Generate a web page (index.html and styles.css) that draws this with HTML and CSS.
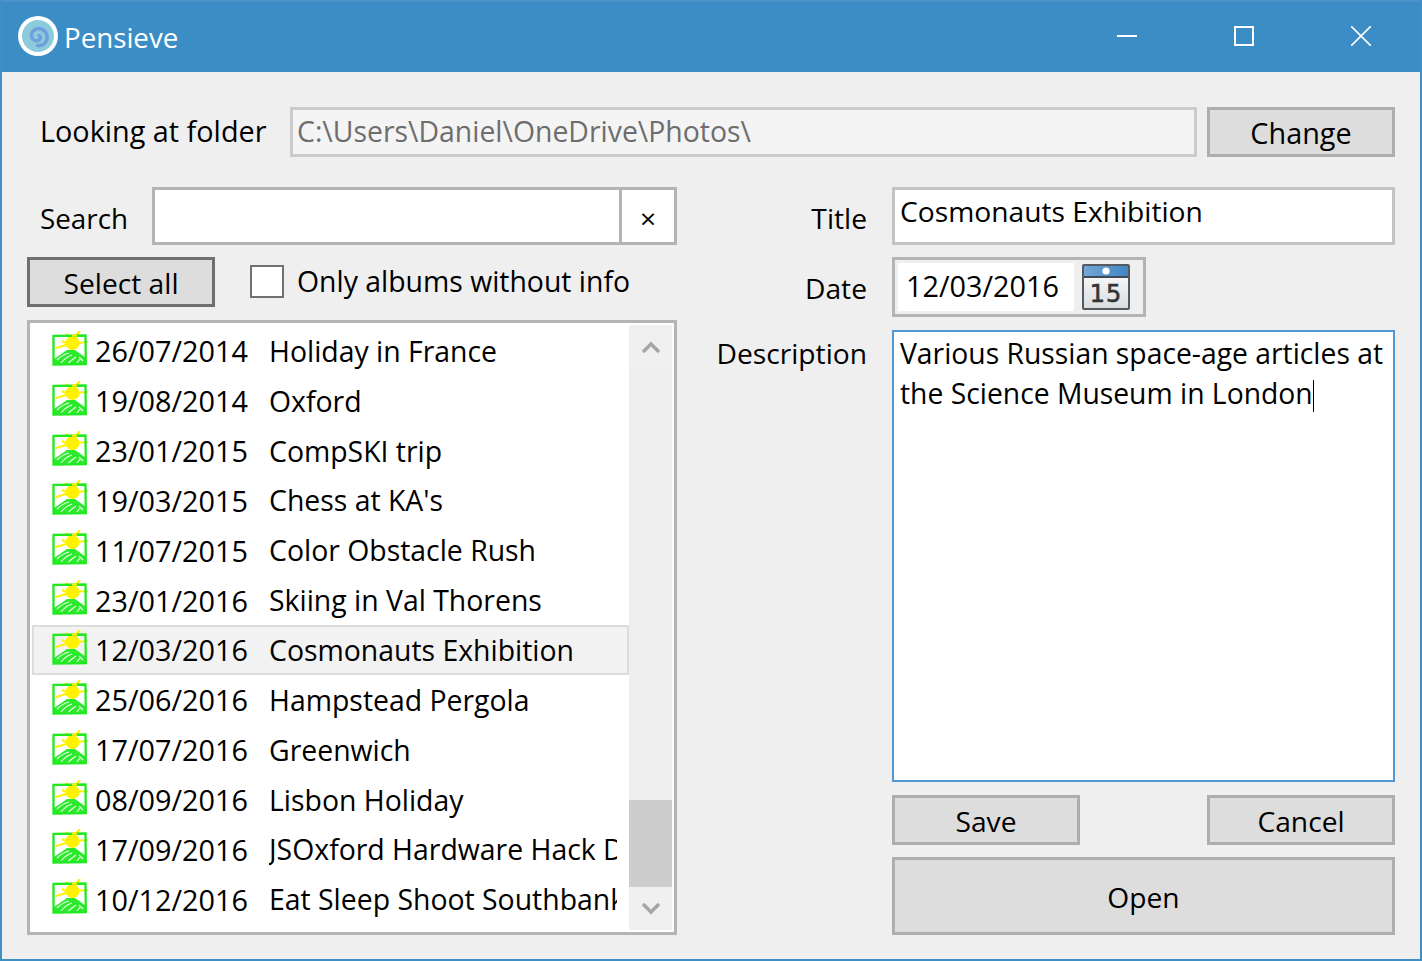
FILE: index.html
```html
<!DOCTYPE html>
<html lang="en">
<head>
    <meta charset="UTF-8">
    <meta name="viewport" content="width=device-width, initial-scale=1.0">
    <title>Pensieve</title>
    <link rel="stylesheet" href="styles.css">
</head>
<body>
    <div class="window">
        <header class="titlebar">
            <svg class="logo" viewBox="0 0 40 40">
                <circle cx="20" cy="20" r="20" fill="#fff"/>
                <circle cx="20" cy="20" r="16" fill="#8ccbdc"/>
                <path d="M21 19.500c2 1 2 4-1 5-4 1-7-2-6.500-6 .5-4 5-7 9.500-5.500 5 1.500 7.500 7 5.500 11.500-1.500 3.500-5 5.500-9 5" fill="none" stroke="#6f9fdc" stroke-width="3.400" stroke-linecap="round"/>
            </svg>
            <span class="app-name">Pensieve</span>
            <div class="window-controls">
                <span class="control"><svg viewBox="0 0 20 20"><path d="M0 10h20" stroke="#fff" stroke-width="2"/></svg></span>
                <span class="control"><svg viewBox="0 0 20 20"><rect x="1" y="1" width="18" height="18" fill="none" stroke="#fff" stroke-width="2"/></svg></span>
                <span class="control"><svg viewBox="0 0 20 20"><path d="M0 0l20 20M20 0L0 20" stroke="#fff" stroke-width="1.6"/></svg></span>
            </div>
        </header>

        <main class="content">
            <div class="folder-row">
                <span class="folder-label">Looking at folder</span>
                <div class="folder-path">C:\Users\Daniel\OneDrive\Photos\</div>
                <button class="btn btn-change" type="button">Change</button>
            </div>

            <div class="panels">
                <section class="left-panel">
                    <div class="search-row">
                        <span class="search-label">Search</span>
                        <div class="search-box">
                            <div class="search-input"></div>
                            <div class="search-clear">×</div>
                        </div>
                    </div>
                    <div class="select-row">
                        <button class="btn btn-select" type="button"><span class="btn-text">Select all</span></button>
                        <span class="checkbox"></span>
                        <span class="check-label">Only albums without info</span>
                    </div>
                    <div class="album-list">
                        <div class="albums" id="albums"></div>
                        <div class="scrollbar">
                            <div class="scroll-btn">
                                <svg viewBox="0 0 20 16"><path d="M2 13l8-8 8 8" fill="none" stroke="#a6a6a6" stroke-width="3.500"/></svg>
                            </div>
                            <div class="scroll-track"><div class="scroll-thumb"></div></div>
                            <div class="scroll-btn">
                                <svg viewBox="0 0 20 16"><path d="M2 3l8 8 8-8" fill="none" stroke="#a6a6a6" stroke-width="3.500"/></svg>
                            </div>
                        </div>
                    </div>
                </section>

                <section class="right-panel">
                    <span class="field-label label-title">Title</span>
                    <div class="title-box">Cosmonauts Exhibition</div>

                    <span class="field-label label-date">Date</span>
                    <div class="date-box">
                        <div class="date-text">12/03/2016</div>
                        <svg class="calendar" viewBox="0 0 48 46">
                            <defs>
                                <linearGradient id="calTop" x1="0" x2="1" y1="0" y2="0">
                                    <stop offset="0" stop-color="#74a7d6"/>
                                    <stop offset="1" stop-color="#3f86c2"/>
                                </linearGradient>
                                <linearGradient id="calBody" x1="0" x2="0" y1="0" y2="1">
                                    <stop offset="0" stop-color="#ffffff"/>
                                    <stop offset="1" stop-color="#d8dde0"/>
                                </linearGradient>
                            </defs>
                            <rect x="1" y="1" width="46" height="44" rx="1" fill="url(#calBody)" stroke="#555a60" stroke-width="2"/>
                            <rect x="2" y="2" width="44" height="10" fill="url(#calTop)"/>
                            <rect x="2" y="12" width="44" height="2" fill="#3f4a55"/>
                            <circle cx="24" cy="7" r="3.6" fill="#fff"/>
                            <text x="24" y="38" text-anchor="middle" class="cal-num">15</text>
                        </svg>
                    </div>

                    <span class="field-label label-desc">Description</span>
                    <div class="desc-box">Various Russian space-age articles at<br>the Science Museum in London<span class="caret"></span></div>

                    <div class="actions">
                        <div class="save-row">
                            <button class="btn btn-small" type="button"><span class="btn-text">Save</span></button>
                            <button class="btn btn-small" type="button"><span class="btn-text">Cancel</span></button>
                        </div>
                        <button class="btn btn-open" type="button"><span class="btn-text">Open</span></button>
                    </div>
                </section>
            </div>
        </main>
    </div>

    <template id="albumIcon">
        <svg class="album-icon" viewBox="0 0 36 36">
            <circle cx="20.500" cy="12" r="7" fill="#fff200"/>
            <path d="M21 8L28 0M23 12l13-1M14 12L10 10M14 14l-10 3M17 6l-3-3" stroke="#fff200" stroke-width="2.200" fill="none"/>
            <path d="M2 28l13-9 8 0 11 8v6H2z" fill="#2bea2b"/>
            <path d="M5 29c4-4 8-6 12-7M9 32c4-5 8-7 11-8M16 33c2-3 5-5 8-7M25 32l3-4M27 26l4 4" stroke="#e4fbe4" stroke-width="1.200" fill="none"/>
            <path d="M1.500 4.800l32-.3.300 28.700-32.300.3z" fill="none" stroke="#22e822" stroke-width="2.300"/>
            <path d="M20 4.700l5-.2" stroke="#fff200" stroke-width="2.300"/>
        </svg>
    </template>

    <script>
        const albums = [
            ['26/07/2014', 'Holiday in France'],
            ['19/08/2014', 'Oxford'],
            ['23/01/2015', 'CompSKI trip'],
            ['19/03/2015', "Chess at KA's"],
            ['11/07/2015', 'Color Obstacle Rush'],
            ['23/01/2016', 'Skiing in Val Thorens'],
            ['12/03/2016', 'Cosmonauts Exhibition'],
            ['25/06/2016', 'Hampstead Pergola'],
            ['17/07/2016', 'Greenwich'],
            ['08/09/2016', 'Lisbon Holiday'],
            ['17/09/2016', 'JSOxford Hardware Hack Day'],
            ['10/12/2016', 'Eat Sleep Shoot Southbank']
        ];

        const list = document.getElementById('albums');
        const icon = document.getElementById('albumIcon');

        albums.forEach(function(album, i) {
            const row = document.createElement('div');
            row.className = i === 6 ? 'album selected' : 'album';
            row.appendChild(icon.content.cloneNode(true));

            const date = document.createElement('span');
            date.className = 'album-date';
            date.textContent = album[0];
            row.appendChild(date);

            const name = document.createElement('span');
            name.className = 'album-name';
            name.textContent = album[1];
            row.appendChild(name);

            list.appendChild(row);
        });
    </script>
</body>
</html>
```

FILE: styles.css
```css
* {
    box-sizing: border-box;
}

body {
    margin: 0;
    font-family: "Open Sans", "Noto Sans", sans-serif;
    font-size: 28.2px;
    color: #000;
    background: #efefef;
}

.window {
    width: 1422px;
    height: 961px;
    border: 2px solid #3f8fc7;
    border-top: 0;
    display: flex;
    flex-direction: column;
    overflow: hidden;
}

.titlebar {
    height: 72px;
    background: #3c8dc5;
    border-top: 2px solid #4a94ca;
    display: flex;
    align-items: center;
    padding-left: 16px;
    color: #fff;
}

.logo {
    width: 40px;
    height: 40px;
    flex: none;
    margin-top: -2px;
}

.app-name {
    margin-left: 6px;
    font-size: 27.7px;
}

.window-controls {
    margin-left: auto;
    display: flex;
    margin-right: 1px;
    margin-top: -2px;
}

.control {
    width: 117px;
    height: 70px;
    display: flex;
    align-items: center;
    justify-content: center;
}

.control svg {
    width: 20px;
    height: 20px;
}

.content {
    flex: 1;
    padding: 35px 25px 0 25px;
}

.folder-row {
    display: flex;
    align-items: center;
    height: 50px;
}

.folder-label {
    margin-left: 13px;
    width: 250px;
    font-size: 28.8px;
    margin-top: -3px;
}

.folder-path {
    width: 907px;
    height: 50px;
    padding: 0 4px;
    line-height: 42px;
    background: #f4f4f4;
    border: 3px solid #cbcbcb;
    color: #6d6d6d;
    white-space: nowrap;
    font-size: 28.4px;
}

.btn {
    font: inherit;
    color: #000;
    background: #dddddd;
    border: 3px solid #aeaeb2;
    padding: 0;
}

.btn-text {
    position: relative;
    top: 1px;
}

.btn-change {
    width: 188px;
    height: 50px;
    margin-left: 10px;
    font-size: 28.8px;
}

.panels {
    display: flex;
    margin-top: 30px;
}

.left-panel {
    width: 650px;
    flex: none;
}

.search-row {
    display: flex;
    align-items: center;
    height: 58px;
}

.search-label {
    margin-left: 13px;
    width: 112px;
    margin-top: 4px;
    font-size: 27.8px;
}

.search-box {
    flex: 1;
    height: 58px;
    display: flex;
    background: #fff;
    border: 3px solid #b4b4b8;
}

.search-input {
    flex: 1;
}

.search-clear {
    width: 55px;
    border-left: 3px solid #b4b4b8;
    text-align: center;
    line-height: 56px;
}

.select-row {
    display: flex;
    align-items: center;
    height: 50px;
    margin-top: 12px;
}

.btn-select {
    width: 188px;
    height: 50px;
    border-color: #6f6f6f;
}

.checkbox {
    width: 34px;
    height: 33px;
    margin-left: 35px;
    background: #fff;
    border: 2px solid #707070;
    margin-bottom: 1px;
}

.check-label {
    margin-left: 13px;
    margin-bottom: 2px;
    font-size: 28.4px;
}

.album-list {
    margin-top: 13px;
    height: 615px;
    background: #fff;
    border: 3px solid #b4b4b8;
    display: flex;
    padding: 2px;
}

.albums {
    width: 597px;
    flex: none;
    padding-top: 1px;
    overflow: hidden;
}

.album {
    height: 49.85px;
    display: flex;
    align-items: center;
    padding-left: 18px;
    padding-right: 10px;
    white-space: nowrap;
    border: 2px solid transparent;
    overflow: hidden;
}

.album.selected {
    background: #f2f2f2;
    border-color: #dcdcdc;
}

.album-icon {
    width: 36px;
    height: 36px;
    flex: none;
    margin-bottom: 4px;
}

.album-date {
    margin-left: 7px;
    width: 174px;
    flex: none;
    font-size: 28.8px;
}

.album-name {
    flex: 1;
    overflow: hidden;
    font-size: 28.4px;
}

.scrollbar {
    width: 43px;
    flex: none;
    background: #eeeeee;
    display: flex;
    flex-direction: column;
}

.scroll-btn {
    height: 43px;
    flex: none;
    display: flex;
    align-items: center;
    justify-content: center;
    background: #f0f0f0;
}

.scroll-btn svg {
    width: 20px;
    height: 16px;
}

.scroll-track {
    flex: 1;
    display: flex;
    flex-direction: column;
    justify-content: flex-end;
}

.scroll-thumb {
    height: 87px;
    background: #cdcdcd;
}

.right-panel {
    width: 718px;
    flex: none;
    display: grid;
    grid-template-columns: 190px 503px;
    column-gap: 25px;
    grid-template-rows: 58px 60px 452px auto;
    row-gap: 12px;
    align-items: start;
}

.field-label {
    text-align: right;
}

.label-title {
    line-height: 62px;
}

.label-date {
    line-height: 62px;
}

.label-desc {
    line-height: 48px;
}

.title-box {
    height: 58px;
    background: #fff;
    border: 3px solid #c3c3c6;
    padding: 0 5px;
    line-height: 42px;
}

.date-box {
    width: 254px;
    height: 60px;
    border: 3px solid #b4b4b8;
    display: flex;
    align-items: center;
    padding-left: 3px;
}

.date-text {
    width: 176px;
    height: 48px;
    background: #fff;
    padding-left: 8px;
    line-height: 46px;
    font-size: 28.8px;
}

.calendar {
    width: 48px;
    height: 46px;
    margin-left: 8px;
    flex: none;
}

.cal-num {
    font-family: "DejaVu Sans", sans-serif;
    font-size: 24px;
    font-weight: 400;
    fill: #333;
    stroke: #333;
    stroke-width: 0.6px;
    letter-spacing: 1px;
}

.desc-box {
    height: 452px;
    background: #fff;
    border: 2px solid #4f9ad6;
    padding: 1px 6px 0;
    line-height: 40px;
    margin-top: 1px;
    font-size: 28.3px;
}

.caret {
    display: inline-block;
    width: 1px;
    height: 32px;
    background: #000;
    vertical-align: -8px;
}

.actions {
    grid-column: 2;
    display: flex;
    flex-direction: column;
    gap: 12px;
    margin-top: 2px;
}

.save-row {
    display: flex;
    justify-content: space-between;
}

.btn-small {
    width: 188px;
    height: 50px;
}

.btn-open {
    height: 78px;
}
```
